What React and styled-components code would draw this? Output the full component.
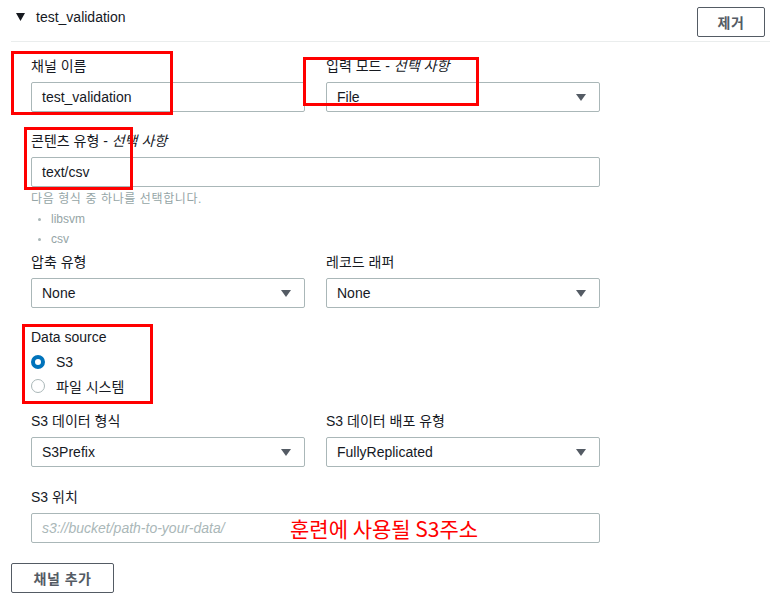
import React from "react"
import styled, { createGlobalStyle } from "styled-components"

const GlobalStyle = createGlobalStyle`
  body {
    margin: 0;
    background: #ffffff;
    font-family: "Liberation Sans", "Noto Sans CJK KR", sans-serif;
    color: #16191f;
  }
`

const Page = styled.div`
  position: relative;
  width: 770px;
  height: 599px;
  padding-left: 11px;
  box-sizing: border-box;
  overflow: hidden;
`

const Header = styled.div`
  display: flex;
  justify-content: space-between;
  align-items: flex-start;
  height: 34px;
  padding: 7px 5px 0 5px;
  border-bottom: 1px solid #eaeded;
`

const Title = styled.div`
  display: flex;
  align-items: center;
  gap: 11px;
  font-size: 14px;
  line-height: 20px;
`

const OutlineButton = styled.button`
  height: 30px;
  width: ${({ w }) => w}px;
  margin-top: ${({ mt }) => mt || 0}px;
  border: 1px solid #545b64;
  border-radius: 2px;
  background: #ffffff;
  color: #545b64;
  font-family: inherit;
  font-size: 14px;
  font-weight: bold;
  letter-spacing: 0.5px;
  padding: 0;
`

const Body = styled.div`
  width: 569px;
  padding: 14px 0 0 20px;
  display: flex;
  flex-direction: column;
`

const Row = styled.div`
  display: grid;
  grid-template-columns: 274px 274px;
  column-gap: 21px;
  margin-top: ${({ mt }) => mt || 0}px;
`

const FieldBox = styled.div`
  display: flex;
  flex-direction: column;
  margin-top: ${({ mt }) => mt || 0}px;
`

const Label = styled.div`
  font-size: 14px;
  line-height: 20px;
  margin-bottom: ${({ mb }) => (mb === undefined ? 6 : mb)}px;
  em {
    font-style: italic;
  }
`

const Control = styled.div`
  position: relative;
  display: flex;
  align-items: center;
  justify-content: space-between;
  height: 30px;
  box-sizing: border-box;
  border: 1px solid #aab7b8;
  border-radius: 2px;
  padding: 0 13px 0 10px;
  font-size: 14px;
  color: ${({ placeholder }) => (placeholder ? "#aab7b8" : "#16191f")};
  font-style: ${({ placeholder }) => (placeholder ? "italic" : "normal")};
`

const Help = styled.div`
  font-size: 12px;
  line-height: 20px;
  color: #95a5a6;
  letter-spacing: 0.6px;
  margin-top: 2px;
`

const Bullets = styled.ul`
  margin: 0;
  padding: 0 0 0 20px;
  font-size: 12px;
  line-height: 20px;
  color: #95a5a6;
  li::marker {
    font-size: 10px;
    color: #aab7b8;
  }
`

const RadioRow = styled.div`
  display: flex;
  align-items: center;
  gap: 11px;
  height: 24px;
  font-size: 14px;
`

const RadioDot = styled.span`
  width: 14px;
  height: 14px;
  box-sizing: border-box;
  border-radius: 50%;
  border: ${({ on }) => (on ? "4px solid #0073bb" : "1px solid #aab7b8")};
  background: #ffffff;
`

const Note = styled.span`
  position: absolute;
  left: 258px;
  top: 3px;
  font-size: 21px;
  line-height: 22px;
  font-style: normal;
  color: #ff0000;
  font-family: "Noto Sans CJK KR", sans-serif;
  white-space: nowrap;
`

const Mark = styled.div`
  position: absolute;
  left: ${({ x }) => x}px;
  top: ${({ y }) => y}px;
  width: ${({ w }) => w}px;
  height: ${({ h }) => h}px;
  box-sizing: border-box;
  border: 3px solid #ff0000;
  pointer-events: none;
`

const Arrow = () => (
  <svg width="10" height="7" viewBox="0 0 10 7">
    <path d="M0 0 L10 0 L5 7 Z" fill="#545b64" />
  </svg>
)

const Select = ({ value }) => (
  <Control>
    <span>{value}</span>
    <Arrow />
  </Control>
)

export default function App() {
  return (
    <>
      <GlobalStyle />
      <Page>
        <Header>
          <Title>
            <svg width="9" height="8" viewBox="0 0 9 8">
              <path d="M0 0 L9 0 L4.5 8 Z" fill="#16191f" />
            </svg>
            test_validation
          </Title>
          <OutlineButton w={68}>제거</OutlineButton>
        </Header>

        <Body>
          <Row>
            <FieldBox>
              <Label>채널 이름</Label>
              <Control>test_validation</Control>
            </FieldBox>
            <FieldBox>
              <Label>
                입력 모드 - <em>선택 사항</em>
              </Label>
              <Select value="File" />
            </FieldBox>
          </Row>

          <FieldBox mt={19}>
            <Label>
              콘텐츠 유형 - <em>선택 사항</em>
            </Label>
            <Control>text/csv</Control>
            <Help>다음 형식 중 하나를 선택합니다.</Help>
            <Bullets>
              <li>libsvm</li>
              <li>csv</li>
            </Bullets>
          </FieldBox>

          <Row mt={3}>
            <FieldBox>
              <Label>압축 유형</Label>
              <Select value="None" />
            </FieldBox>
            <FieldBox>
              <Label>레코드 래퍼</Label>
              <Select value="None" />
            </FieldBox>
          </Row>

          <FieldBox mt={19}>
            <Label mb={3}>Data source</Label>
            <RadioRow>
              <RadioDot on />
              S3
            </RadioRow>
            <RadioRow>
              <RadioDot />
              파일 시스템
            </RadioRow>
          </FieldBox>

          <Row mt={13}>
            <FieldBox>
              <Label>S3 데이터 형식</Label>
              <Select value="S3Prefix" />
            </FieldBox>
            <FieldBox>
              <Label>S3 데이터 배포 유형</Label>
              <Select value="FullyReplicated" />
            </FieldBox>
          </Row>

          <FieldBox mt={20}>
            <Label>S3 위치</Label>
            <Control placeholder>
              s3://bucket/path-to-your-data/
              <Note>훈련에 사용될 S3주소</Note>
            </Control>
          </FieldBox>
        </Body>

        <OutlineButton w={103} mt={20}>
          채널 추가
        </OutlineButton>

        <Mark x={11} y={51} w={162} h={64} />
        <Mark x={303} y={57} w={176} h={49} />
        <Mark x={24} y={127} w={109} h={63} />
        <Mark x={22} y={324} w={131} h={80} />
      </Page>
    </>
  )
}
